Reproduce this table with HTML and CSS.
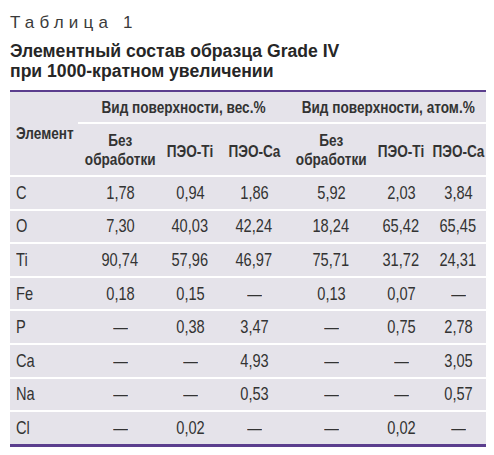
FILE: index.html
```html
<!DOCTYPE html>
<html lang="ru">
<head>
<meta charset="utf-8">
<link rel="stylesheet" href="styles.css">
</head>
<body>
<div class="page">
  <div class="label">Таблица 1</div>
  <h1 class="title">Элементный состав образца Grade IV<br>при 1000-кратном увеличении</h1>
  <table class="data">
    <colgroup>
      <col class="c0"><col class="c1"><col class="c2"><col class="c3"><col class="c4"><col class="c5"><col class="c6">
    </colgroup>
    <thead>
      <tr class="h1">
        <th rowspan="2" class="el"><span class="n">Элемент</span></th>
        <th colspan="3" class="grp"><span class="n">Вид поверхности, вес.%</span></th>
        <th colspan="3" class="grp"><span class="n">Вид поверхности, атом.%</span></th>
      </tr>
      <tr class="h2">
        <th><span class="n">Без<br>обработки</span></th><th class="one"><span class="n">ПЭО-Ti</span></th><th class="one"><span class="n">ПЭО-Ca</span></th>
        <th><span class="n">Без<br>обработки</span></th><th class="one"><span class="n">ПЭО-Ti</span></th><th class="one"><span class="n">ПЭО-Ca</span></th>
      </tr>
    </thead>
    <tbody>
      <tr><td><span class="n">C</span></td><td><span class="n">1,78</span></td><td><span class="n">0,94</span></td><td><span class="n">1,86</span></td><td><span class="n">5,92</span></td><td><span class="n">2,03</span></td><td><span class="n">3,84</span></td></tr>
      <tr><td><span class="n">O</span></td><td><span class="n">7,30</span></td><td><span class="n">40,03</span></td><td><span class="n">42,24</span></td><td><span class="n">18,24</span></td><td><span class="n">65,42</span></td><td><span class="n">65,45</span></td></tr>
      <tr><td><span class="n">Ti</span></td><td><span class="n">90,74</span></td><td><span class="n">57,96</span></td><td><span class="n">46,97</span></td><td><span class="n">75,71</span></td><td><span class="n">31,72</span></td><td><span class="n">24,31</span></td></tr>
      <tr><td><span class="n">Fe</span></td><td><span class="n">0,18</span></td><td><span class="n">0,15</span></td><td><span class="n">—</span></td><td><span class="n">0,13</span></td><td><span class="n">0,07</span></td><td><span class="n">—</span></td></tr>
      <tr><td><span class="n">P</span></td><td><span class="n">—</span></td><td><span class="n">0,38</span></td><td><span class="n">3,47</span></td><td><span class="n">—</span></td><td><span class="n">0,75</span></td><td><span class="n">2,78</span></td></tr>
      <tr><td><span class="n">Ca</span></td><td><span class="n">—</span></td><td><span class="n">—</span></td><td><span class="n">4,93</span></td><td><span class="n">—</span></td><td><span class="n">—</span></td><td><span class="n">3,05</span></td></tr>
      <tr><td><span class="n">Na</span></td><td><span class="n">—</span></td><td><span class="n">—</span></td><td><span class="n">0,53</span></td><td><span class="n">—</span></td><td><span class="n">—</span></td><td><span class="n">0,57</span></td></tr>
      <tr><td><span class="n">Cl</span></td><td><span class="n">—</span></td><td><span class="n">0,02</span></td><td><span class="n">—</span></td><td><span class="n">—</span></td><td><span class="n">0,02</span></td><td><span class="n">—</span></td></tr>
    </tbody>
  </table>
</div>
</body>
</html>
```

FILE: styles.css
```css
html, body {
  margin: 0;
  padding: 0;
  background: #ffffff;
}

.page {
  padding: 13px 8px 0 10px;
  font-family: "Liberation Sans", Arial, sans-serif;
  color: #333333;
}

.label {
  font-size: 17px;
  line-height: 20px;
  letter-spacing: 5.2px;
  color: #3a3a3a;
}

.title {
  margin: 8px 0 0 0;
  font-size: 17.6px;
  line-height: 20px;
  font-weight: bold;
  color: #262626;
}

.data {
  margin-top: 9px;
  width: 476px;
  table-layout: fixed;
  border-collapse: separate;
  border-spacing: 0;
  background: #e5e3ea;
  border-top: 2px solid #5b3e8e;
  border-bottom: 3px solid #5b3e8e;
  font-family: "Liberation Sans", Arial, sans-serif;
  color: #333333;
}

.c0 { width: 68px; }
.c1 { width: 84px; }
.c2 { width: 56px; }
.c3 { width: 72px; }
.c4 { width: 82px; }
.c5 { width: 58px; }
.c6 { width: 56px; }

.n {
  display: inline-block;
  white-space: nowrap;
  transform: scaleX(0.8);
  transform-origin: center center;
  margin: 0 -20px;
}

.data th {
  font-weight: bold;
  font-size: 17px;
  line-height: 19px;
  text-align: center;
  padding: 0;
  color: #333333;
  white-space: nowrap;
}

.data th.el {
  text-align: left;
  padding-left: 6px;
  border-bottom: 2px solid #ffffff;
}

.data th.el .n,
.data td:first-child .n {
  transform-origin: left center;
  margin: 0;
}

.h1 .grp {
  height: 30px;
  border-bottom: 2px solid #ffffff;
}

.h2 th {
  height: 51px;
  border-bottom: 2px solid #ffffff;
}

.h2 th.one {
  padding-top: 4px;
  height: 47px;
}

.data td {
  font-size: 19px;
  line-height: 20px;
  height: 31.6px;
  padding: 0;
  text-align: center;
  vertical-align: middle;
  white-space: nowrap;
}

.data td .n {
  transform: scaleX(0.77);
}

.data td:first-child {
  text-align: left;
  padding-left: 6px;
}

.data tbody tr + tr td {
  border-top: 2px solid #ffffff;
}
```
